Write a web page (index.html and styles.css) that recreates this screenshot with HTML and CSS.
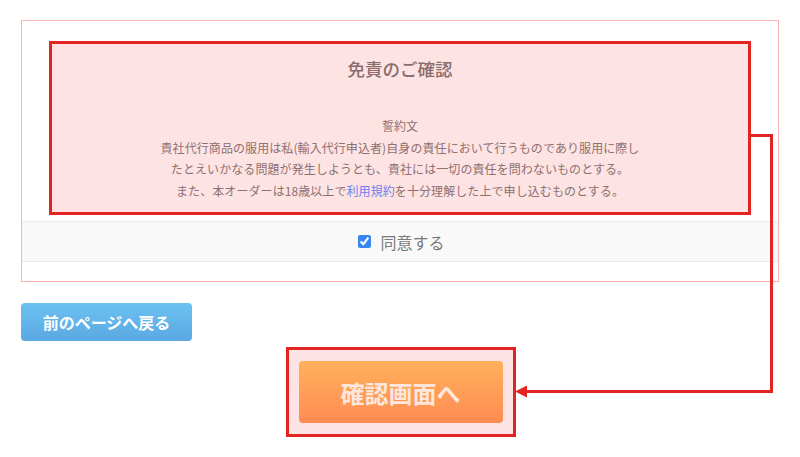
FILE: index.html
```html
<!DOCTYPE html>
<html lang="ja">
<head>
<meta charset="utf-8">
<title>免責のご確認</title>
<link rel="stylesheet" href="styles.css">
</head>
<body>
<div class="page">
  <section class="panel">
    <div class="notice">
      <h2 class="notice-title">免責のご確認</h2>
      <div class="notice-body">
        <p>誓約文</p>
        <p>貴社代行商品の服用は私(輸入代行申込者)自身の責任において行うものであり服用に際し</p>
        <p>たとえいかなる問題が発生しようとも、貴社には一切の責任を問わないものとする。</p>
        <p>また、本オーダーは18歳以上で<a class="terms-link" href="#">利用規約</a>を十分理解した上で申し込むものとする。</p>
      </div>
    </div>
    <div class="agree-row">
      <label class="agree-label"><input class="agree-check" type="checkbox" checked>同意する</label>
    </div>
    <div class="panel-foot"></div>
  </section>
  <div class="actions">
    <button class="btn-back" type="button">前のページへ戻る</button>
    <div class="confirm-wrap">
      <button class="btn-confirm" type="button">確認画面へ</button>
    </div>
  </div>
  <svg class="annot" width="800" height="457" viewBox="0 0 800 457">
    <polyline points="751,135.5 771.5,135.5 771.5,391.5 526,391.5" fill="none" stroke="#e42423" stroke-width="3"/>
    <polygon points="515,391.5 527,385.5 527,397.5" fill="#e42423"/>
  </svg>
</div>
</body>
</html>
```
FILE: styles.css
```css
* { box-sizing: border-box; }
html, body { margin: 0; padding: 0; background: #fff; }
body {
  font-family: "Noto Sans CJK JP", "Noto Sans", sans-serif;
  width: 800px;
  height: 457px;
  overflow: hidden;
}
.page {
  position: relative;
  padding: 20px 21px 0;
}
.panel {
  border: 1px solid #fbb3b3;
  background: #fff;
}
.notice {
  margin: 20px 27px 0;
  border: 3px solid #e42423;
  background: #fde3e3;
  padding: 12px 0 11px;
  text-align: center;
}
.notice-title {
  margin: 0;
  font-size: 17.5px;
  line-height: 26px;
  font-weight: 500;
  color: #8a6c6c;
}
.notice-body {
  margin-top: 33px;
  font-size: 12px;
  letter-spacing: 0.08px;
  line-height: 21.5px;
  color: #8f7070;
}
.notice-body p { margin: 0; }
.terms-link {
  color: #6f7ef0;
  text-decoration: none;
}
.agree-row {
  margin-top: 6px;
  height: 41px;
  background: #f9f9f9;
  border-top: 1px solid #ececec;
  border-bottom: 1px solid #ececec;
  display: flex;
  align-items: center;
  justify-content: center;
}
.agree-label {
  display: flex;
  align-items: center;
  font-size: 16px;
  color: #7a7a7a;
  margin-left: 3px;
}
.agree-check {
  width: 13px;
  height: 13px;
  margin: 0 9px 0 0;
  accent-color: #3a86f0;
}
.panel-foot { height: 19px; }
.actions {
  display: flex;
  flex-direction: column;
}
.btn-back {
  align-self: flex-start;
  margin-top: 21px;
  width: 171px;
  height: 38px;
  border: none;
  border-radius: 4px;
  background: linear-gradient(#6cc0f2, #5aa9e2);
  color: #fff;
  font-family: inherit;
  font-size: 16px;
  font-weight: bold;
  padding: 0;
}
.confirm-wrap {
  align-self: center;
  margin-top: 6px;
  margin-left: 1px;
  border: 3px solid #e42423;
  background: #fde3e3;
  padding: 11px 10px;
}
.btn-confirm {
  display: block;
  width: 204px;
  height: 62px;
  border: none;
  border-radius: 4px;
  background: linear-gradient(#ffb15c, #ff8b52);
  color: #fde6dc;
  font-family: inherit;
  font-size: 24px;
  font-weight: bold;
  padding: 0;
}
.annot {
  position: absolute;
  left: 0;
  top: 0;
  pointer-events: none;
}
```
